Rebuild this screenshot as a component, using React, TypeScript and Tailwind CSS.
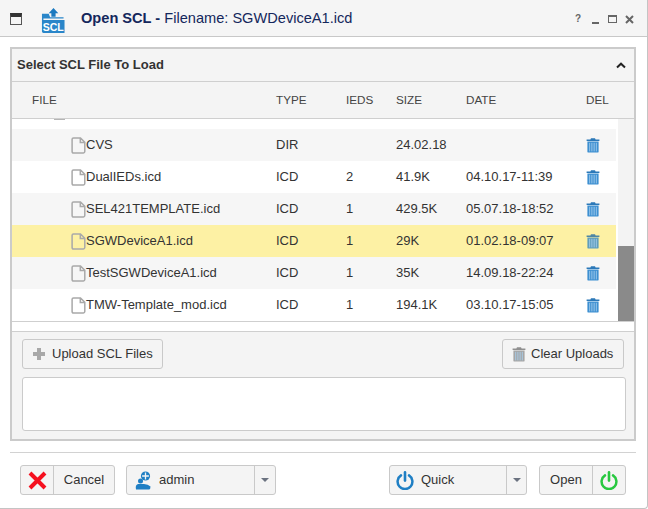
import React from "react";

const FONT = { fontFamily: '"Liberation Sans", Arial, sans-serif' };

function Trash({ color = "#3d8fd1", dark = "#2b78b8", size = 16 }: { color?: string; dark?: string; size?: number }) {
  return (
    <svg width={size} height={size} viewBox="0 0 14 16" className="block">
      <path d="M5 1.2 L9 1.2 L9.6 2.4 L13.4 2.4 L13.4 4 L0.6 4 L0.6 2.4 L4.4 2.4 Z" fill={dark} />
      <path d="M1.4 4.6 H12.6 V14.4 Q12.6 15.6 11.4 15.6 H2.6 Q1.4 15.6 1.4 14.4 Z" fill={color} />
      {[3.4, 5.2, 7, 8.8, 10.6].map((x) => (
        <rect key={x} x={x - 0.35} y={5.8} width={0.7} height={8.6} fill="#a8d0ee" />
      ))}
    </svg>
  );
}

function FileIcon() {
  return (
    <svg width={15} height={17} viewBox="0 0 15 17" className="block shrink-0">
      <path
        d="M2.5 0.9 H9.5 L13.8 5.2 V14.6 Q13.8 16 12.4 16 H2.5 Q1.1 16 1.1 14.6 V2.3 Q1.1 0.9 2.5 0.9 Z M9.3 1 V5.4 H13.7"
        fill="none"
        stroke="#a9a9a9"
        strokeWidth={1.5}
      />
    </svg>
  );
}

function Power({ color }: { color: string }) {
  return (
    <svg width={18} height={19} viewBox="0 0 18 19" className="block">
      <path d="M5 4.4 A7.4 7.4 0 1 0 13 4.4" fill="none" stroke={color} strokeWidth={2.5} strokeLinecap="round" />
      <line x1={9} y1={1.4} x2={9} y2={9.6} stroke={color} strokeWidth={2.6} strokeLinecap="round" />
    </svg>
  );
}

function Caret() {
  return <div className="w-0 h-0 border-l-[4px] border-r-[4px] border-t-[4px] border-l-transparent border-r-transparent border-t-[#6b7280]" />;
}

const rows = [
  { name: "CVS", type: "DIR", ieds: "", size: "24.02.18", date: "" },
  { name: "DualIEDs.icd", type: "ICD", ieds: "2", size: "41.9K", date: "04.10.17-11:39" },
  { name: "SEL421TEMPLATE.icd", type: "ICD", ieds: "1", size: "429.5K", date: "05.07.18-18:52" },
  { name: "SGWDeviceA1.icd", type: "ICD", ieds: "1", size: "29K", date: "01.02.18-09:07", selected: true },
  { name: "TestSGWDeviceA1.icd", type: "ICD", ieds: "1", size: "35K", date: "14.09.18-22:24" },
  { name: "TMW-Template_mod.icd", type: "ICD", ieds: "1", size: "194.1K", date: "03.10.17-15:05" },
];

const btn = "h-[30px] flex items-center bg-[#f4f4f4] border border-[#c9c9c9] rounded-[3px] text-[13px] text-[#333]";

export default function App() {
  return (
    <div style={FONT} className="w-[648px] h-[509px] bg-white overflow-hidden flex flex-col border-r border-b border-[#c4c4c4] rounded-br-[4px] box-border">
      {/* Title bar */}
      <div className="h-[37px] shrink-0 bg-[#f5f5f5] border-b border-[#c8c8c8] flex items-center relative pl-[10px] pr-[13px]">
        <div className="w-[12px] h-[12px] border border-[#555] border-t-[4px] border-t-[#333] bg-[#f5f5f5] mt-[1px]" />
        <svg width={24} height={25} viewBox="0 0 25 26" className="block ml-[19px] mt-[4px]">
          <path d="M13 0 L18 5.5 H15.2 V9 H10.8 V5.5 H8 Z" fill="#1c7ac0" />
          <path d="M1 6 H8 L9.5 9.5 H23.5 V11 H2.5 V12.5 H24.5 V26 H2.5 Q1 26 1 24.5 Z" fill="#2a86c9" />
          <text x={12.8} y={23.6} textAnchor="middle" fontSize={11} fontWeight={700} fill="#fff" fontFamily="Liberation Sans">SCL</text>
        </svg>
        <div className="ml-[16px] text-[14.6px] text-[#14275c] whitespace-nowrap mt-[1px]">
          <span className="font-bold">Open SCL - </span>
          <span>Filename: SGWDeviceA1.icd</span>
        </div>
        <div className="ml-auto flex items-center text-[#666] mt-[2px]">
          <span className="text-[10px] font-bold leading-none">?</span>
          <div className="w-[7px] h-[2px] bg-[#666] mt-[7px] ml-[11px]" />
          <div className="w-[9px] h-[8px] border border-[#666] border-t-2 ml-[9px]" />
          <svg width={9} height={9} viewBox="0 0 9 9" className="block ml-[8px]">
            <path d="M1 1 L8 8 M8 1 L1 8" stroke="#666" strokeWidth={2} />
          </svg>
        </div>
      </div>

      {/* Panel */}
      <div className="mt-[10px] ml-[10px] w-[626px] h-[394px] shrink-0 border-2 border-[#cbcbcb] flex flex-col box-border bg-white">
        <div className="h-[33px] shrink-0 bg-[#f4f4f4] border-b border-[#cfcfcf] flex items-center justify-between pl-[5px] pr-[8px]">
          <span className="text-[13px] font-bold text-[#333]">Select SCL File To Load</span>
          <svg width={10} height={7} viewBox="0 0 10 7" className="block">
            <path d="M1 5.5 L5 1.7 L9 5.5" fill="none" stroke="#222" strokeWidth={2} />
          </svg>
        </div>
        <div className="h-[37px] shrink-0 bg-[#f4f4f4] border-b border-[#cfcfcf] flex items-center text-[11.7px] text-[#444]">
          <div className="w-[264px] pl-[20px]">FILE</div>
          <div className="w-[70px]">TYPE</div>
          <div className="w-[50px]">IEDS</div>
          <div className="w-[70px]">SIZE</div>
          <div className="w-[120px]">DATE</div>
          <div>DEL</div>
        </div>
        <div className="h-[203px] shrink-0 flex border-b border-[#cfcfcf] bg-white">
          <div className="w-[604px] shrink-0 overflow-hidden">
            <div className="h-[10px] bg-white relative">
              <div className="absolute left-[42px] top-0 w-[11px] h-px bg-[#b5b5b5]" />
            </div>
            {rows.map((r, i) => (
              <div
                key={r.name}
                className={`h-[32px] flex items-center text-[13px] text-[#333] ${r.selected ? "bg-[#fdf1a4] text-[#222]" : i % 2 === 0 ? "bg-[#f6f6f6]" : "bg-white"}`}
              >
                <div className="w-[264px] pl-[59px] flex items-center whitespace-nowrap">
                  <FileIcon />
                  <span>{r.name}</span>
                </div>
                <div className="w-[70px]">{r.type}</div>
                <div className="w-[50px]">{r.ieds}</div>
                <div className="w-[70px]">{r.size}</div>
                <div className="w-[120px] whitespace-nowrap">{r.date}</div>
                <div className="-ml-[1px]">
                  <Trash color={r.selected ? "#5f9dbb" : "#3d8fd1"} dark={r.selected ? "#4e86a4" : "#2b78b8"} />
                </div>
              </div>
            ))}
          </div>
          <div className="w-[16px] ml-[2px] bg-[#f3f3f3] flex flex-col justify-end">
            <div className="h-[75px] bg-[#8a8a8a]" />
          </div>
        </div>
        <div className="h-[10px] shrink-0 bg-white border-b border-[#cfcfcf]" />
        <div className="flex-1 bg-[#f4f4f4] pl-[10px] pr-[8px] pt-[7px]">
          <div className="flex justify-between">
            <div className={`${btn} w-[141px]`}>
              <span className="ml-[10px] relative w-[12px] h-[12px] block">
                <span className="absolute left-[4px] top-0 w-[4px] h-[12px] bg-[#a8a8a8]" />
                <span className="absolute left-0 top-[4px] w-[12px] h-[4px] bg-[#a8a8a8]" />
              </span>
              <span className="ml-[7px] -mt-[1px]">Upload SCL Files</span>
            </div>
            <div className={`${btn} w-[122px] mr-[2px]`}>
              <span className="ml-[8px]"><Trash color="#a6a6a6" dark="#8f8f8f" /></span>
              <span className="ml-[4px] -mt-[1px]">Clear Uploads</span>
            </div>
          </div>
          <div className="mt-[8px] h-[54px] bg-white border border-[#cbcbcb] rounded-[3px]" />
        </div>
      </div>

      {/* Divider */}
      <div className="mt-[11px] ml-[10px] w-[626px] h-px shrink-0 bg-[#d2d2d2]" />

      {/* Footer */}
      <div className="mt-[12px] px-[20px] flex items-center">
        <div className={`${btn} w-[95px]`}>
          <div className="w-[33px] h-full flex items-center justify-center border-r border-[#c9c9c9]">
            <svg width={19} height={19} viewBox="0 0 19 19" className="block">
              <path d="M2 2 L17 17 M17 2 L2 17" stroke="#f5101f" strokeWidth={4} />
            </svg>
          </div>
          <div className="flex-1 text-center">Cancel</div>
        </div>
        <div className={`${btn} w-[150px] ml-[11px]`}>
          <div className="flex-1 h-full flex items-center border-r border-[#c9c9c9] pl-[8px]">
            <svg width={16} height={19} viewBox="0 0 16 19" className="block">
              <circle cx={10.5} cy={5} r={4.6} fill="#1f7fc4" />
              <path d="M10.5 1.6 V8.4 M7.1 5 H13.9" stroke="#f4f4f4" strokeWidth={1.3} />
              <circle cx={5.5} cy={10} r={2.5} fill="#1f7fc4" />
              <path d="M1 18.4 Q0 14 3 13 H9 Q13 13 15.5 15.5 Q15.5 18.4 14 18.4 Z" fill="#1f7fc4" />
            </svg>
            <span className="ml-[8px]">admin</span>
          </div>
          <div className="w-[20px] flex justify-center"><Caret /></div>
        </div>
        <div className={`${btn} w-[138px] ml-auto`}>
          <div className="flex-1 h-full flex items-center border-r border-[#c9c9c9] pl-[6px]">
            <Power color="#1f7fc4" />
            <span className="ml-[7px]">Quick</span>
          </div>
          <div className="w-[19px] flex justify-center"><Caret /></div>
        </div>
        <div className={`${btn} w-[87px] ml-[12px] mr-[1px]`}>
          <div className="w-[53px] h-full flex items-center justify-center border-r border-[#c9c9c9]">Open</div>
          <div className="flex-1 flex justify-center"><Power color="#28c840" /></div>
        </div>
      </div>
    </div>
  );
}
